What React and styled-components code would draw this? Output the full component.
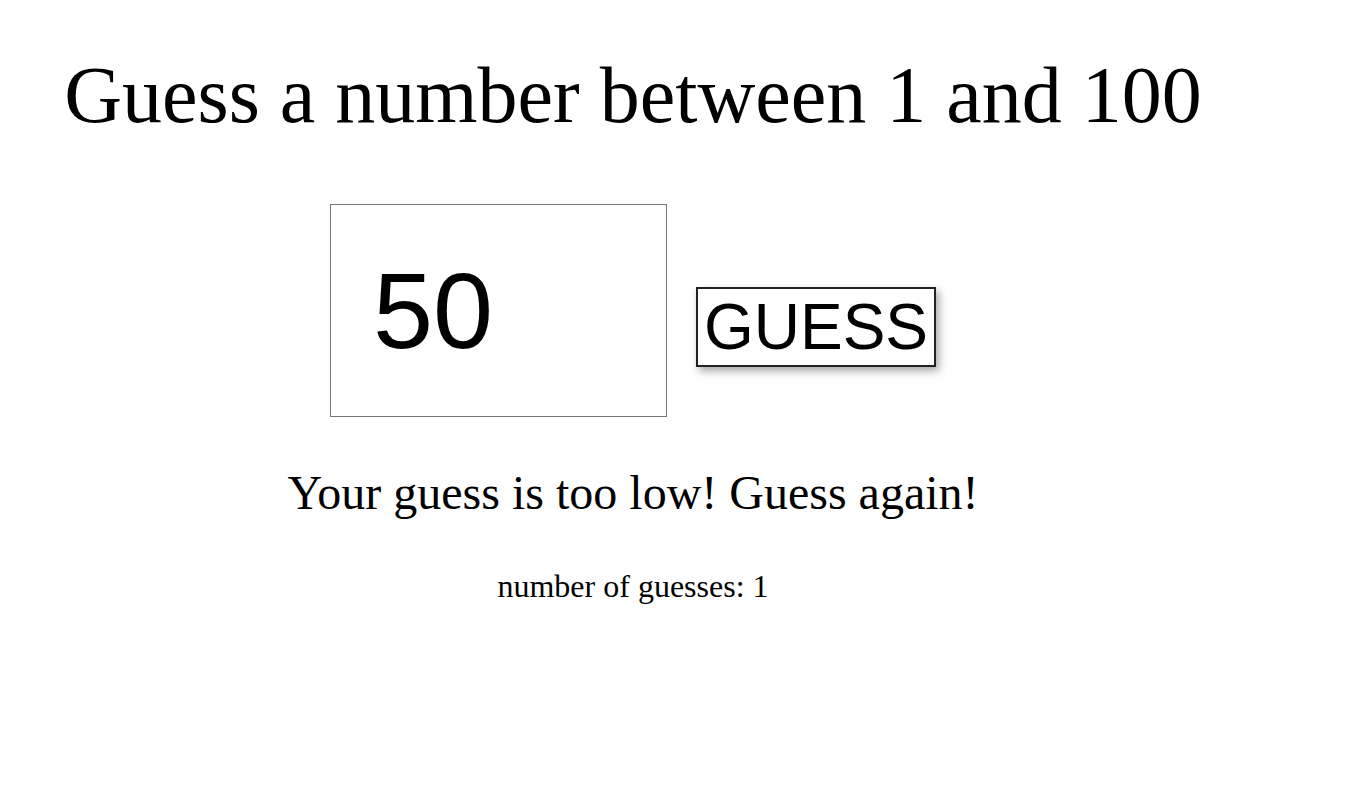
import React from "react";
import styled, { createGlobalStyle } from "styled-components";

const Global = createGlobalStyle`
  html, body { margin: 0; padding: 0; background: #fff; }
  body { font-family: "Liberation Serif", "Times New Roman", serif; color: #000; }
`;

const Page = styled.main`
  width: 1266px;
  display: flex;
  flex-direction: column;
  align-items: center;
  text-align: center;
  padding-top: 49px;
`;

const Title = styled.h1`
  margin: 0;
  font-family: "Liberation Serif", "Times New Roman", serif;
  font-weight: normal;
  font-size: 80px;
  line-height: 1.15;
`;

const GuessRow = styled.div`
  display: flex;
  align-items: flex-start;
  gap: 29px;
  margin-top: 63px;
`;

const NumberInput = styled.input`
  box-sizing: border-box;
  width: 337px;
  height: 213px;
  border: 1px solid #767676;
  padding: 0 0 0 42px;
  font-family: "Liberation Sans", Arial, sans-serif;
  font-size: 108px;
  color: #000;
  background: #fff;
  outline: none;
  border-radius: 0;
`;

const GuessButton = styled.button`
  margin-top: 83px;
  padding: 1px 6px;
  border: 2px solid #222;
  background: #fff;
  color: #000;
  font-family: "Liberation Sans", Arial, sans-serif;
  font-size: 64px;
  line-height: normal;
  box-shadow: 3px 4px 8px rgba(0, 0, 0, 0.35);
  cursor: pointer;
  border-radius: 0;
`;

const Message = styled.p`
  margin: ${(p) => p.$top}px 0 0;
  font-size: ${(p) => p.$size}px;
  line-height: 1.15;
`;

export default function App() {
  return (
    <>
      <Global />
      <Page>
        <Title>Guess a number between 1 and 100</Title>
        <GuessRow>
          <NumberInput type="text" defaultValue="50" />
          <GuessButton type="button">GUESS</GuessButton>
        </GuessRow>
        <Message $size={48} $top={48}>Your guess is too low! Guess again!</Message>
        <Message $size={32} $top={48}>number of guesses: 1</Message>
      </Page>
    </>
  );
}
